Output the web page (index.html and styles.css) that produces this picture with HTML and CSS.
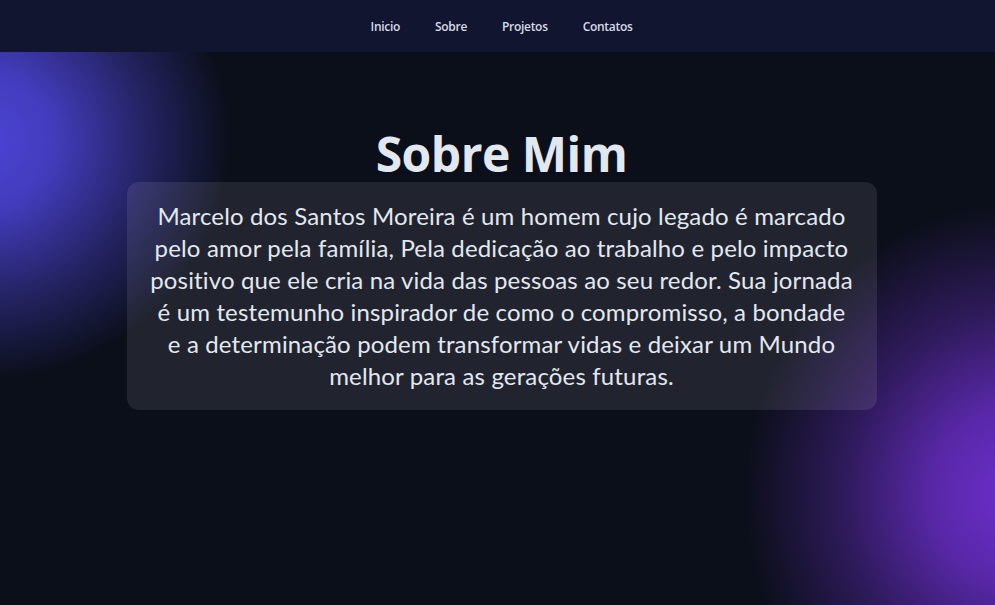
FILE: index.html
```html
<!DOCTYPE html>
<html lang="pt-BR">
<head>
<meta charset="utf-8">
<title>Sobre Mim</title>
<link rel="stylesheet" href="styles.css">
</head>
<body>
<header class="topbar">
  <nav class="nav">
    <a href="#" class="nav-link">Inicio</a>
    <a href="#" class="nav-link">Sobre</a>
    <a href="#" class="nav-link">Projetos</a>
    <a href="#" class="nav-link">Contatos</a>
  </nav>
</header>
<main class="about">
  <h1 class="about-title">Sobre Mim</h1>
  <div class="about-card">
    <p class="about-text">Marcelo dos Santos Moreira é um homem cujo legado é marcado<br>pelo amor pela família, Pela dedicação ao trabalho e pelo impacto<br>positivo que ele cria na vida das pessoas ao seu redor. Sua jornada<br>é um testemunho inspirador de como o compromisso, a bondade<br>e a determinação podem transformar vidas e deixar um Mundo<br>melhor para as gerações futuras.</p>
  </div>
</main>
</body>
</html>
```
FILE: styles.css
```css
* { box-sizing: border-box; }
html, body { margin: 0; padding: 0; }
body {
  height: 605px;
  overflow: hidden;
  color: #e2e8f0;
  font-family: "Lato", "Open Sans", sans-serif;
  background:
    radial-gradient(ellipse 250px 240px at -20px 140px,
      rgba(76, 68, 216, 1) 0%,
      rgba(76, 68, 216, 0.85) 30%,
      rgba(76, 68, 216, 0.4) 65%,
      rgba(76, 68, 216, 0) 100%),
    radial-gradient(ellipse 270px 290px at 1015px 495px,
      rgba(108, 46, 204, 1) 0%,
      rgba(108, 46, 204, 0.8) 30%,
      rgba(108, 46, 204, 0.35) 65%,
      rgba(108, 46, 204, 0) 100%),
    #0b0f1a;
}
.topbar {
  height: 52px;
  background: #11152f;
  display: flex;
  align-items: center;
  justify-content: center;
  padding-left: 8px;
}
.nav {
  display: flex;
  gap: 35px;
}
.nav-link {
  color: #d5dbe6;
  text-decoration: none;
  font-family: "Open Sans", sans-serif;
  font-weight: 600;
  font-size: 12px;
  letter-spacing: -0.3px;
}
.about {
  display: flex;
  flex-direction: column;
  align-items: center;
  padding: 74px 0 0 8px;
}
.about-title {
  margin: 0;
  font-family: "Open Sans", sans-serif;
  font-weight: 700;
  font-size: 48px;
  line-height: 56px;
  color: #e2e8f0;
  letter-spacing: -0.5px;
}
.about-card {
  width: 750px;
  padding: 18px 10px;
  border-radius: 12px;
  background: rgba(255, 255, 255, 0.09);
}
.about-text {
  margin: 0;
  text-align: center;
  font-size: 24px;
  line-height: 32px;
  letter-spacing: 0.15px;
  color: #e2e8f0;
  white-space: nowrap;
}
```
